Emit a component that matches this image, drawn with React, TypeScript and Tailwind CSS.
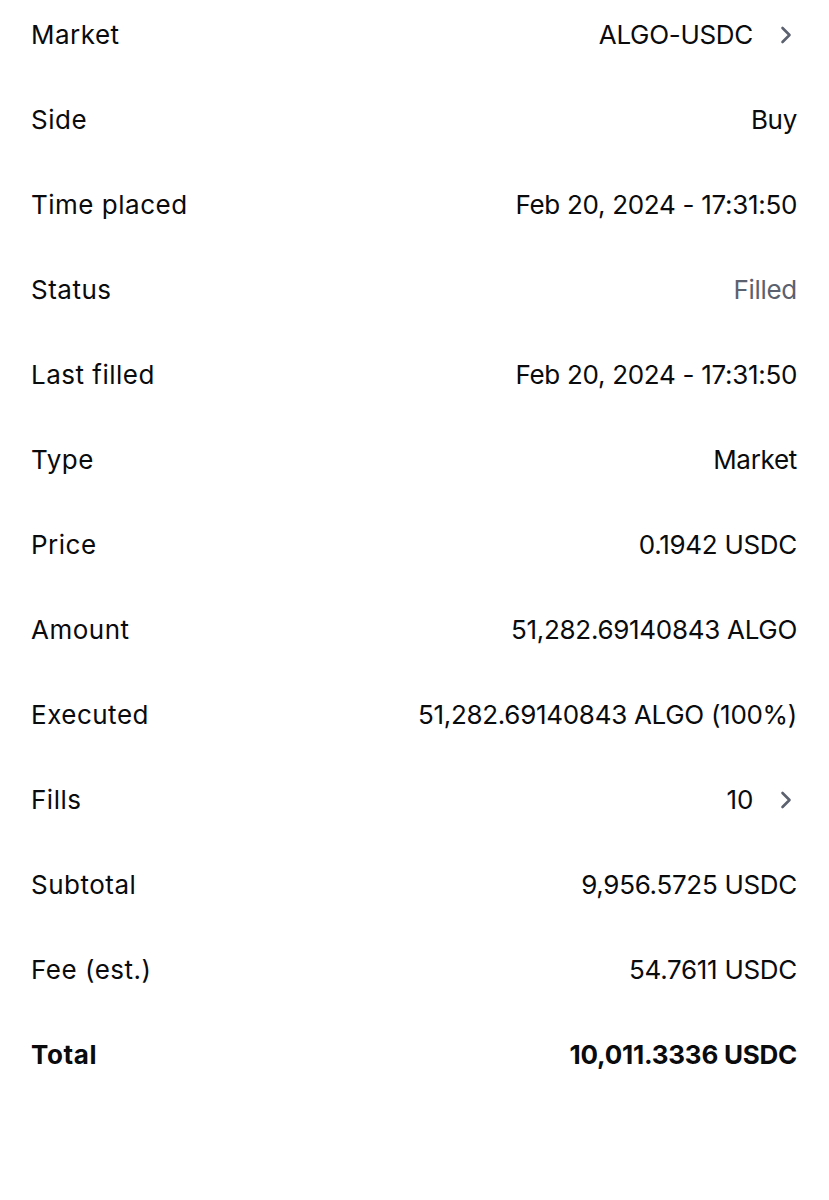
import React from "react";

const Chevron = () => (
  <svg width="14" height="18" viewBox="0 0 14 18" className="ml-[26px] mr-[4px]" fill="none">
    <path d="M3.5 2 L10.5 9 L3.5 16" stroke="#5b616e" strokeWidth="2.6" strokeLinecap="round" strokeLinejoin="round" />
  </svg>
);

type Row = { label: string; value: string; chevron?: boolean; muted?: boolean; bold?: boolean };

const rows: Row[] = [
  { label: "Market", value: "ALGO-USDC", chevron: true },
  { label: "Side", value: "Buy" },
  { label: "Time placed", value: "Feb 20, 2024 - 17:31:50" },
  { label: "Status", value: "Filled", muted: true },
  { label: "Last filled", value: "Feb 20, 2024 - 17:31:50" },
  { label: "Type", value: "Market" },
  { label: "Price", value: "0.1942 USDC" },
  { label: "Amount", value: "51,282.69140843 ALGO" },
  { label: "Executed", value: "51,282.69140843 ALGO (100%)" },
  { label: "Fills", value: "10", chevron: true },
  { label: "Subtotal", value: "9,956.5725 USDC" },
  { label: "Fee (est.)", value: "54.7611 USDC" },
  { label: "Total", value: "10,011.3336 USDC", bold: true },
];

export default function App() {
  return (
    <div
      className="w-[829px] h-[1200px] bg-white text-[#0a0b0d] pl-[31px] pr-[32px] pt-[20px] flex flex-col gap-[55px] text-[26px]"
      style={{ fontFamily: "Inter, 'Liberation Sans', sans-serif" }}
    >
      {rows.map((r) => (
        <div key={r.label} className="h-[30px] flex items-center justify-between leading-[30px]">
          <span className={r.bold ? "font-bold tracking-[0.6px]" : "tracking-[0.5px]"}>{r.label}</span>
          <span className="flex items-center">
            <span
              className={
                (r.muted ? "text-[#5b616e] " : "") +
                (r.bold ? "font-bold tracking-[-0.25px]" : "tracking-[-0.3px]")
              }
            >
              {r.value}
            </span>
            {r.chevron && <Chevron />}
          </span>
        </div>
      ))}
    </div>
  );
}
